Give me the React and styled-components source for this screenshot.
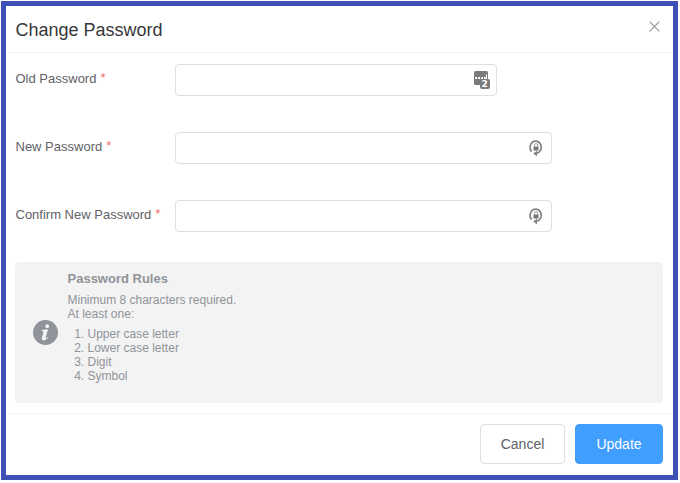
import React from "react";
import styled, { createGlobalStyle } from "styled-components";

const GlobalStyle = createGlobalStyle`
  * { box-sizing: border-box; }
  body { margin: 0; background: #fff; font-family: "Liberation Sans", Arial, sans-serif; }
`;

const Page = styled.main`
  width: 680px;
  height: 483px;
  padding: 1px 2px 3px 1px;
  background:
    linear-gradient(#edf6fe, #edf6fe) 0 52px / 100% 1px no-repeat,
    linear-gradient(#eff5fb, #eff5fb) 0 413px / 100% 1px no-repeat,
    #fff;
`;

const Dialog = styled.section`
  display: flex;
  flex-direction: column;
  width: 677px;
  height: 479px;
  border: 5px solid #3f51b5;
  background: #fff;
`;

const Header = styled.header`
  display: flex;
  justify-content: space-between;
  align-items: flex-start;
  height: 47px;
  padding: 12px 13px 0 9.5px;
  border-bottom: 1px solid #edf6fe;
`;

const Title = styled.h1`
  margin: 0;
  color: #36373a;
  font-size: 18px;
  font-weight: 400;
  line-height: 24px;
`;

const CloseButton = styled.button`
  display: flex;
  margin: 3px 0 0;
  padding: 0;
  border: 0;
  background: none;
  color: #909399;
`;

const Form = styled.form`
  display: grid;
  gap: 36px;
  padding: 11px 9px 0;
`;

const Field = styled.div`
  display: grid;
  grid-template-columns: 160px auto;
  justify-content: start;
  height: 32px;
`;

const Label = styled.label`
  display: flex;
  padding: 1px 0 0 0.5px;
  color: #606266;
  font-size: 13px;
  line-height: 28px;
  white-space: nowrap;
`;

const Required = styled.span`
  margin: -1px 0 0 4px;
  color: #f56c6c;
`;

const InputBox = styled.div`
  display: flex;
  align-items: center;
  width: ${({ $width }) => $width}px;
  height: 32px;
  padding-right: 6px;
  border: 1px solid #dcdfe6;
  border-radius: 4px;
  background: #fff;
`;

const Input = styled.input`
  flex: 1;
  min-width: 0;
  height: 28px;
  padding: 0 10px;
  border: 0;
  outline: 0;
  background: transparent;
`;

const Rules = styled.aside`
  display: flex;
  align-items: center;
  height: 141px;
  margin: 30px 10px 0 9px;
  padding-left: 18px;
  border-radius: 4px;
  background: #f3f3f3;
  color: #909399;
`;

const RulesBody = styled.div`
  align-self: flex-start;
  padding: 8px 0 0 9.5px;
  font-size: 12px;
  line-height: 14px;
`;

const RulesTitle = styled.h2`
  margin: 0 0 5px;
  font-size: 13px;
  font-weight: 700;
  line-height: 18px;
`;

const Text = styled.p`
  margin: 0;
`;

const List = styled.ol`
  margin: 6px 0 0;
  padding-left: 20px;
`;

const Footer = styled.footer`
  display: flex;
  justify-content: flex-end;
  gap: 10px;
  height: 62px;
  margin-top: 10px;
  padding: 10px 10px 0;
  border-top: 1px solid #eff5fb;
`;

const Button = styled.button`
  width: ${({ $primary }) => ($primary ? 88 : 85)}px;
  height: 40px;
  padding: 0;
  border: 1px solid ${({ $primary }) => ($primary ? "#409eff" : "#dcdfe6")};
  border-radius: 4px;
  background: ${({ $primary }) => ($primary ? "#409eff" : "#fff")};
  color: ${({ $primary }) => ($primary ? "#fff" : "#606266")};
  font: 14px "Liberation Sans", Arial, sans-serif;
`;

const CloseIcon = () => (
  <svg width="11" height="11" viewBox="0 0 11 11" stroke="currentColor" strokeWidth="1.1">
    <path d="M.7.7l9.6 9.6M10.3.7L.7 10.3" />
  </svg>
);

const VaultIcon = () => (
  <svg width="18" height="20" viewBox="0 0 18 20">
    <path d="M3.5 1h11A1.5 1.5 0 0 1 16 2.5V15H3.5A1.5 1.5 0 0 1 2 13.5v-11A1.5 1.5 0 0 1 3.5 1z" fill="#7b7b7b" />
    <path d="M3.2 7h1.8v2H3.2zM6.2 7H8v2H6.200zM9.200 7H11v2H9.200zM12 7h1.800v2H12zM14 4.500h1V9h-1z" fill="#fff" />
    <rect x="8" y="9" width="10" height="10" rx="2" fill="#7b7b7b" />
    <text x="12.6" y="17.4" textAnchor="middle" fill="#fff" fontFamily="DejaVu Sans" fontSize="9" fontWeight="700">2</text>
  </svg>
);

const GenerateIcon = () => (
  <svg width="18" height="20" viewBox="0 0 18 20" fill="none" stroke="#858585">
    <path d="M4.6 13.6A5.6 6.2 0 1 1 9.500 15.400" strokeWidth="1.800" />
    <path d="M10 12.500v6L6.200 15.500z" fill="#858585" stroke="none" />
    <path d="M7.300 8.700V7.300a1.700 1.700 0 0 1 3.400 0v1.400" stroke="#999" strokeWidth="1" />
    <rect x="6.500" y="8.500" width="5" height="4" fill="#777" stroke="none" />
  </svg>
);

const InfoIcon = () => (
  <svg width="25" height="25" viewBox="0 0 25 25">
    <circle cx="12.5" cy="12.5" r="12.5" fill="#909399" />
    <circle cx="14.2" cy="6.2" r="1.9" fill="#f3f3f3" />
    <path d="M8.700 10l6.300-.8-2.400 8.600c-.2.9.4.9 1.700-.7l.7.5c-3 4.200-7 3.600-6 0l1.400-5c.2-1-.4-1.400-1.900-1.500z" fill="#f3f3f3" />
  </svg>
);

const fields = [
  { id: "old", label: "Old Password", width: 322, Icon: VaultIcon },
  { id: "new", label: "New Password", width: 377, Icon: GenerateIcon },
  { id: "confirm", label: "Confirm New Password", width: 377, Icon: GenerateIcon },
];

const requirements = ["Upper case letter", "Lower case letter", "Digit", "Symbol"];

export default function App() {
  return (
    <>
      <GlobalStyle />
      <Page>
        <Dialog role="dialog" aria-labelledby="title">
          <Header>
            <Title id="title">Change Password</Title>
            <CloseButton type="button" aria-label="Close"><CloseIcon /></CloseButton>
          </Header>
          <Form>
            {fields.map(({ id, label, width, Icon }) => (
              <Field key={id}>
                <Label htmlFor={id}>{label}<Required>*</Required></Label>
                <InputBox $width={width}>
                  <Input id={id} type="password" />
                  <Icon />
                </InputBox>
              </Field>
            ))}
          </Form>
          <Rules>
            <InfoIcon />
            <RulesBody>
              <RulesTitle>Password Rules</RulesTitle>
              <Text>Minimum 8 characters required.</Text>
              <Text>At least one:</Text>
              <List>{requirements.map((item) => <li key={item}>{item}</li>)}</List>
            </RulesBody>
          </Rules>
          <Footer>
            <Button type="button">Cancel</Button>
            <Button type="button" $primary>Update</Button>
          </Footer>
        </Dialog>
      </Page>
    </>
  );
}
